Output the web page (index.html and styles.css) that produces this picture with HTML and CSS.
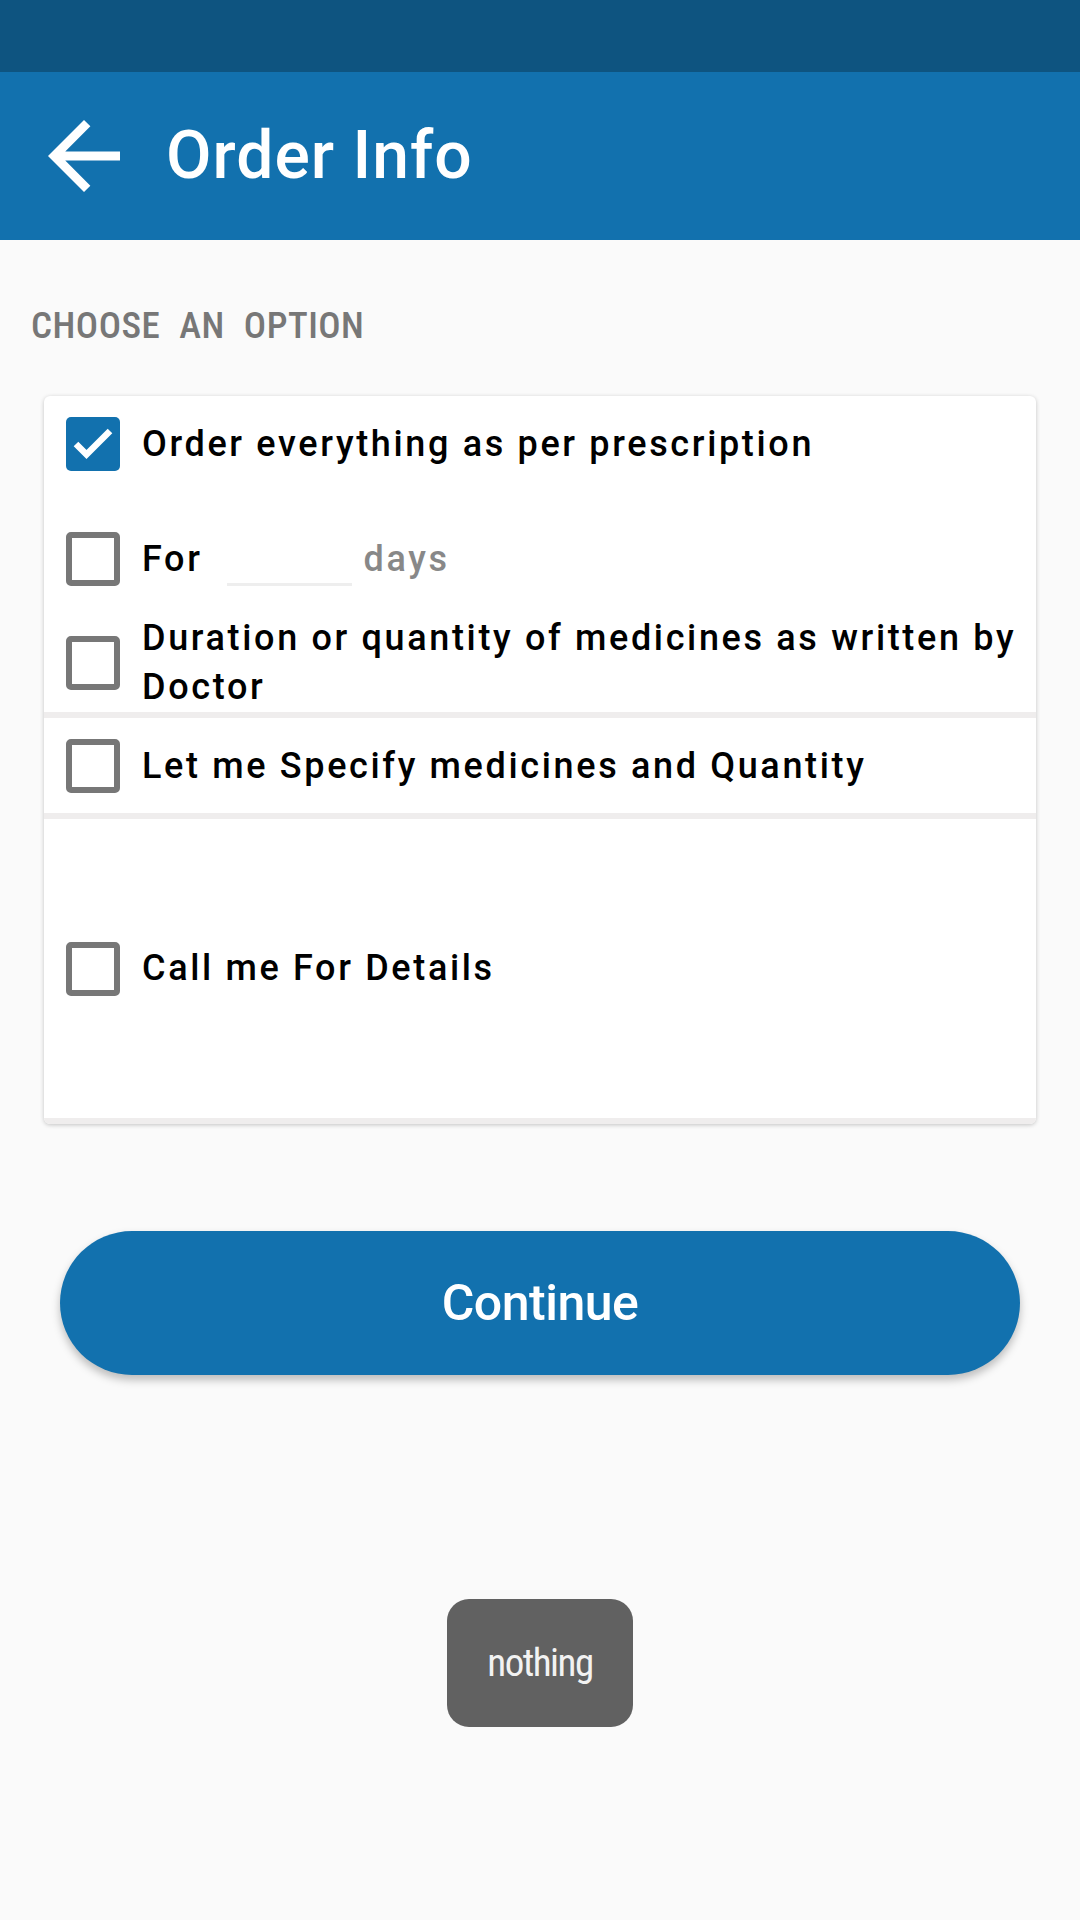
FILE: index.html
```html
<!DOCTYPE html>
<html lang="en">
<head>
<meta charset="utf-8">
<title>Order Info</title>
<link rel="stylesheet" href="styles.css">
</head>
<body>
<div class="statusbar"></div>
<header class="appbar">
  <svg class="back" viewBox="0 0 24 24" aria-hidden="true"><path d="M20 11H7.83l5.59-5.59L12 4l-8 8 8 8 1.41-1.41L7.83 13H20v-2z"/></svg>
  <h1 class="title">Order Info</h1>
</header>
<main class="content">
  <p class="section-label">CHOOSE AN OPTION</p>
  <section class="card">
    <div class="group">
      <label class="option">
        <span class="box checked"><svg viewBox="0 0 54 54"><polyline points="10,27 20.5,37.5 44,14"/></svg></span>
        <span class="label">Order everything as per prescription</span>
      </label>
      <label class="option row-days">
        <span class="box"></span>
        <span class="label">For</span>
        <span class="days-input"></span>
        <span class="days">days</span>
      </label>
      <label class="option row-multi">
        <span class="box"></span>
        <span class="label">Duration or quantity of medicines as written by Doctor</span>
      </label>
    </div>
    <div class="divider"></div>
    <label class="option row-specify">
      <span class="box"></span>
      <span class="label">Let me Specify medicines and Quantity</span>
    </label>
    <div class="divider"></div>
    <label class="option row-call">
      <span class="box"></span>
      <span class="label">Call me For Details</span>
    </label>
    <div class="divider"></div>
  </section>
  <button class="continue" type="button">Continue</button>
</main>
<div class="toast"><span class="toast-text">nothing</span></div>
</body>
</html>
```
FILE: styles.css
```css
* { box-sizing: border-box; }
html, body { margin: 0; padding: 0; }
body {
  width: 1080px;
  height: 1920px;
  background: #fafafa;
  font-family: Roboto, "Noto Sans", sans-serif;
  color: #000;
  overflow: hidden;
  position: relative;
}
.statusbar { height: 72px; background: #0e5480; }
.appbar {
  height: 168px;
  background: #1271ae;
  display: flex;
  align-items: center;
}
.back { width: 108px; height: 108px; margin-left: 30px; fill: #fff; flex: none; }
.title {
  margin: 0 0 0 28px;
  font-size: 66px;
  line-height: 66px;
  font-weight: 500;
  letter-spacing: 1px;
  color: #fff;
}
.content { display: flex; flex-direction: column; }
.section-label {
  margin: 67px 0 0 31px;
  font-size: 37px;
  line-height: 37px;
  font-weight: 500;
  font-stretch: 87.5%;
  letter-spacing: 0.5px;
  word-spacing: 10px;
  color: #777;
}
.card {
  margin: 52px 44px 0 44px;
  background: #fff;
  border-radius: 6px;
  box-shadow: 0 1px 4px rgba(0,0,0,.22);
  overflow: hidden;
}
.group { display: flex; flex-direction: column; padding-top: 21px; }
.option {
  display: flex;
  align-items: center;
  padding-left: 22px;
  font-size: 36px;
  line-height: 49px;
  font-weight: 500;
  letter-spacing: 2.65px;
}
.box {
  flex: none;
  width: 54px;
  height: 54px;
  border: 6px solid #777;
  border-radius: 5px;
  margin-right: 22px;
  display: flex;
}
.box.checked { background: #1271ae; border: none; }
.box svg { width: 54px; height: 54px; fill: none; stroke: #fff; stroke-width: 6.5; }
.row-days { margin-top: 61px; }
.days-input { width: 125px; height: 3px; background: #eee; align-self: flex-end; margin: 0 12px 0 24px; }
.days { color: #888; }
.row-multi { margin-top: 28px; }
.row-multi .label { flex: 1; margin-right: -20px; }
.divider { height: 6px; background: #efeded; }
.row-specify { padding-top: 21px; padding-bottom: 20px; }
.row-call { height: 299px; }
.continue {
  margin: 107px 60px 0 60px;
  height: 144px;
  border: none;
  border-radius: 72px;
  background: #1271ae;
  color: #fff;
  font-family: Roboto, sans-serif;
  font-size: 50px;
  font-weight: 500;
  letter-spacing: -0.5px;
  box-shadow: 0 5px 8px rgba(0,0,0,.25);
}
.toast {
  position: absolute;
  top: 1599px;
  left: 50%;
  transform: translateX(-50%);
  width: 186px;
  height: 128px;
  border-radius: 22px;
  background: #616161;
  color: #f2f2f2;
  font-size: 39px;
  display: flex;
  align-items: center;
  justify-content: center;
}
.toast-text { font-stretch: 75%; letter-spacing: -1.5px; }
```
